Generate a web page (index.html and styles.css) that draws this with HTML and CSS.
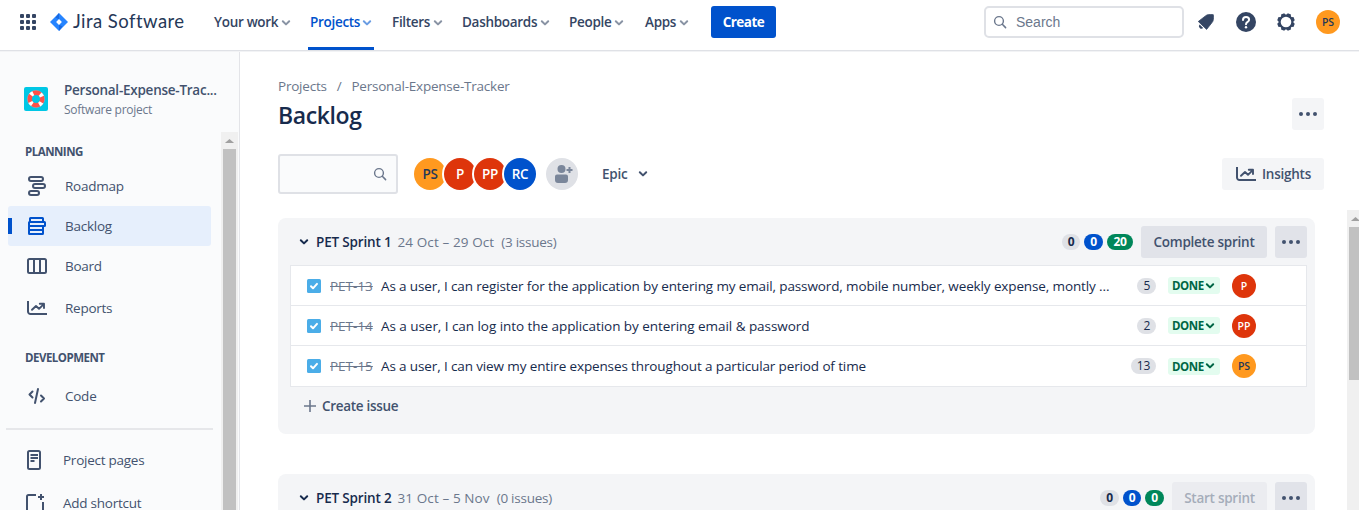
FILE: index.html
```html
<!DOCTYPE html>
<html lang="en">
<head>
<meta charset="utf-8">
<title>Backlog - Jira Software</title>
<link rel="stylesheet" href="styles.css">
</head>
<body>
<svg class="defs" width="0" height="0">
  <symbol id="chev" viewBox="0 0 10 8"><path d="M1.8 2.2 5 5.4 8.2 2.2" fill="none" stroke="currentColor" stroke-width="2" stroke-linecap="round" stroke-linejoin="round"/></symbol>
  <symbol id="search" viewBox="0 0 14 14"><circle cx="6" cy="6" r="4.4" fill="none" stroke="currentColor" stroke-width="1.4"/><path d="M9.3 9.3 12.6 12.6" stroke="currentColor" stroke-width="1.5" stroke-linecap="round"/></symbol>
  <symbol id="dots" viewBox="0 0 18 4"><circle cx="2" cy="2" r="2"/><circle cx="9" cy="2" r="2"/><circle cx="16" cy="2" r="2"/></symbol>
  <symbol id="chart" viewBox="0 0 20 14"><path d="M1 0v10.5A2.5 2.5 0 0 0 3.500 13H20" fill="none" stroke="currentColor" stroke-width="2"/><path d="M5 8.800 9 5l3 2.800L16.500 3.300M12.800 2.800H17V7" fill="none" stroke="currentColor" stroke-width="1.900" stroke-linejoin="round" stroke-linecap="round"/></symbol>
  <symbol id="task" viewBox="0 0 14 14"><rect width="14" height="14" rx="1.500" fill="#4bade8"/><path d="M4 7.300 6 9.300 10 4.900" fill="none" stroke="#fff" stroke-width="2" stroke-linecap="round" stroke-linejoin="round"/></symbol>
</svg>

<header class="topbar">
  <svg class="switcher" width="16" height="16" fill="#344563"><rect width="4" height="4" rx="1"/><rect x="6" width="4" height="4" rx="1"/><rect x="12" width="4" height="4" rx="1"/><rect y="6" width="4" height="4" rx="1"/><rect x="6" y="6" width="4" height="4" rx="1"/><rect x="12" y="6" width="4" height="4" rx="1"/><rect y="12" width="4" height="4" rx="1"/><rect x="6" y="12" width="4" height="4" rx="1"/><rect x="12" y="12" width="4" height="4" rx="1"/></svg>
  <svg class="mark" width="18" height="18" viewBox="0 0 18 18"><path d="M9 0 18 9 9 18 0 9Z" fill="#2684ff"/><path d="M9 0 5.500 4.500 9 6.200Z" fill="#1868e0"/><path d="M9 18 12.500 13.500 9 11.800Z" fill="#1868e0"/><path d="M9 6.100 11.900 9 9 11.900 6.100 9Z" fill="#fff"/></svg>
  <span class="brand">Jira Software</span>
  <nav class="menu">
    <a class="tab"><span>Your work</span><svg><use href="#chev"/></svg></a>
    <a class="tab active"><span>Projects</span><svg><use href="#chev"/></svg></a>
    <a class="tab"><span>Filters</span><svg><use href="#chev"/></svg></a>
    <a class="tab"><span>Dashboards</span><svg><use href="#chev"/></svg></a>
    <a class="tab"><span>People</span><svg><use href="#chev"/></svg></a>
    <a class="tab"><span>Apps</span><svg><use href="#chev"/></svg></a>
  </nav>
  <button class="create">Create</button>
  <div class="global-search"><svg width="14" height="14"><use href="#search"/></svg><span>Search</span></div>
  <div class="tools">
    <svg width="20" height="20" viewBox="0 0 20 20" fill="#344563"><path d="M9.500 3.900C11 2.500 13.500 2.400 17.300 2.700 17.700 6.500 17.500 9 16 10.600L10.600 17.400 2.300 9.500Z" stroke="#344563" stroke-width=".8" stroke-linejoin="round"/><path d="M3.600 12.400 7.200 16A2.550 2.550 0 0 1 3.600 12.400Z"/></svg>
    <svg width="20" height="20" viewBox="0 0 20 20"><circle cx="10" cy="10" r="10" fill="#344563"/><path d="M7 7.900C7 4 13.100 4.200 13.100 7.700 13.100 10 10 9.700 10 12.200" fill="none" stroke="#fff" stroke-width="2" stroke-linecap="round"/><circle cx="10" cy="15.200" r="1.200" fill="#fff"/></svg>
    <svg width="20" height="20" viewBox="0 0 20 20"><circle cx="10" cy="10" r="6.400" fill="none" stroke="#344563" stroke-width="2.200"/><g fill="#344563"><path id="tooth" d="M7.400 3.800 8.300 1.200H11.700L12.600 3.800Z" transform="rotate(22.500 10 10)"/><use href="#tooth" transform="rotate(45 10 10)"/><use href="#tooth" transform="rotate(90 10 10)"/><use href="#tooth" transform="rotate(135 10 10)"/><use href="#tooth" transform="rotate(180 10 10)"/><use href="#tooth" transform="rotate(225 10 10)"/><use href="#tooth" transform="rotate(270 10 10)"/><use href="#tooth" transform="rotate(315 10 10)"/></g></svg>
    <span class="avatar small orange">PS</span>
  </div>
</header>

<div class="body">
  <aside class="sidebar">
    <div class="project">
      <svg width="24" height="24" viewBox="0 0 24 24"><rect width="24" height="24" rx="2" fill="#00c7e5"/><circle cx="12" cy="12" r="8.400" fill="none" stroke="#a3a9bd" stroke-width="1"/><circle cx="12" cy="12" r="6.200" fill="none" stroke="#ff5148" stroke-width="4.400"/><circle cx="12" cy="12" r="6.400" fill="none" stroke="#fff" stroke-width="4.400" stroke-dasharray="2.900 7.153" stroke-dashoffset="-3.577"/></svg>
      <div><div class="project-name">Personal-Expense-Trac...</div><div class="project-type">Software project</div></div>
    </div>
    <div class="side-scroll">
      <div class="side-items">
        <h2>PLANNING</h2>
        <a class="side"><svg width="20" height="20" fill="none" stroke="#42526e" stroke-width="2"><rect x="2" y="1" width="14" height="4" rx="2"/><rect x="6" y="8" width="12" height="4" rx="2"/><rect x="2" y="15" width="10" height="4" rx="2"/></svg><span>Roadmap</span></a>
        <a class="side selected"><svg width="20" height="20" fill="none" stroke="#0052cc" stroke-width="2" stroke-linejoin="round"><rect x="3" y="2" width="13" height="4" rx=".5"/><rect x="2" y="6" width="16" height="4" rx=".5"/><rect x="2" y="10" width="14" height="4" rx=".5"/><rect x="2" y="14" width="14" height="4" rx=".5"/></svg><span>Backlog</span></a>
        <a class="side"><svg width="20" height="20" fill="none" stroke="#42526e" stroke-width="2"><rect x="1" y="3" width="18" height="14" rx="1.500"/><path d="M7 3V17M13 3V17"/></svg><span>Board</span></a>
        <a class="side reports"><svg width="20" height="14" class="ink"><use href="#chart"/></svg><span>Reports</span></a>
        <h2 class="dev">DEVELOPMENT</h2>
        <a class="side"><svg width="20" height="20" fill="none" stroke="#42526e" stroke-width="2" stroke-linecap="round" stroke-linejoin="round"><path d="M5.500 5.500 2.500 8.500 5.500 11.500M11 3 8 17M14 9.500 17 12.500 14 15.500"/></svg><span>Code</span></a>
        <hr>
        <a class="side page"><svg width="20" height="20" fill="none" stroke="#42526e" stroke-width="2"><rect x="3" y="1" width="12" height="18" rx="1.500"/><path d="M5.500 5H13M5.500 8H13M5.500 11H9.500"/></svg><span>Project pages</span></a>
        <a class="side page shortcut"><svg width="20" height="20" fill="none" stroke="#42526e" stroke-width="2"><path d="M11 2H3.500A1.500 1.500 0 0 0 2 3.500V17.500A1.500 1.500 0 0 0 3.500 19H16.500A1.500 1.500 0 0 0 18 17.500V9M16 1V7M13 4H19"/></svg><span>Add shortcut</span></a>
      </div>
      <div class="scrollbar"><i class="up"></i><i class="thumb"></i></div>
    </div>
  </aside>

  <main class="main">
    <div class="crumbs"><span>Projects</span><span class="slash">/</span><span>Personal-Expense-Tracker</span></div>
    <div class="title-row"><h1>Backlog</h1><button class="icon-btn light"><svg width="18" height="4"><use href="#dots"/></svg></button></div>
    <div class="filters">
      <div class="find"><svg width="14" height="14"><use href="#search"/></svg></div>
      <div class="people"><span class="avatar blue">RC</span><span class="avatar red">PP</span><span class="avatar red">P</span><span class="avatar orange">PS</span></div>
      <span class="avatar add"><svg width="18" height="18" viewBox="0 0 18 18" fill="#7a869a"><circle cx="6.500" cy="4" r="4"/><path d="M0 11.500A2 2 0 0 1 2 9.500H11A2 2 0 0 1 13 11.500V15A3 3 0 0 1 10 18H3A3 3 0 0 1 0 15Z"/><path d="M11.500 4H17.500V6H11.500ZM13.500 2H15.500V8H13.500Z"/></svg></span>
      <div class="epic"><span>Epic</span><svg width="10" height="8"><use href="#chev"/></svg></div>
      <button class="insights"><svg width="20" height="14"><use href="#chart"/></svg><span>Insights</span></button>
    </div>

    <div class="board">
      <div class="sprints">
        <section class="sprint">
          <div class="sprint-head"><svg width="10" height="8"><use href="#chev"/></svg><b>PET Sprint 1</b><span class="dates">24 Oct – 29 Oct</span><span class="count">(3 issues)</span>
            <div class="actions"><i class="pill w18">0</i><i class="pill blue w19">0</i><i class="pill green w26">20</i><button class="complete">Complete sprint</button><button class="icon-btn"><svg width="18" height="4"><use href="#dots"/></svg></button></div>
          </div>
          <div class="issues">
            <div class="issue"><svg width="14" height="14"><use href="#task"/></svg><s>PET-13</s><span class="summary">As a user, I can register for the application by entering my email, password, mobile number, weekly expense, montly ...</span><i class="points">5</i><span class="done"><em>DONE</em><svg width="10" height="8"><use href="#chev"/></svg></span><span class="avatar small red">P</span></div>
            <div class="issue"><svg width="14" height="14"><use href="#task"/></svg><s>PET-14</s><span class="summary login">As a user, I can log into the application by entering email &amp; password</span><i class="points">2</i><span class="done"><em>DONE</em><svg width="10" height="8"><use href="#chev"/></svg></span><span class="avatar small red">PP</span></div>
            <div class="issue"><svg width="14" height="14"><use href="#task"/></svg><s>PET-15</s><span class="summary">As a user, I can view my entire expenses throughout a particular period of time</span><i class="points">13</i><span class="done"><em>DONE</em><svg width="10" height="8"><use href="#chev"/></svg></span><span class="avatar small orange">PS</span></div>
          </div>
          <div class="new-issue"><svg width="12" height="12" stroke="#6b778c" stroke-width="1.600"><path d="M6 0V12M0 6H12"/></svg><span>Create issue</span></div>
        </section>
        <section class="sprint">
          <div class="sprint-head"><svg width="10" height="8"><use href="#chev"/></svg><b>PET Sprint 2</b><span class="dates">31 Oct – 5 Nov</span><span class="count">(0 issues)</span>
            <div class="actions"><i class="pill w19">0</i><i class="pill blue w18">0</i><i class="pill green w19">0</i><button class="start" disabled>Start sprint</button><button class="icon-btn"><svg width="18" height="4"><use href="#dots"/></svg></button></div>
          </div>
          <div class="issues"></div>
        </section>
      </div>
      <div class="scrollbar"><i class="up"></i><i class="thumb"></i></div>
    </div>
  </main>
</div>
</body>
</html>
```

FILE: styles.css
```css
* { box-sizing: border-box; }
body {
  margin: 0;
  width: 1359px;
  height: 510px;
  overflow: hidden;
  display: flex;
  flex-direction: column;
  background: #fff;
  color: #172b4d;
  font-family: "Open Sans", "Noto Sans", sans-serif;
  font-size: 13.5px;
  line-height: 20px;
  letter-spacing: -0.25px;
  white-space: nowrap;
}
svg { display: block; flex: none; }
.defs { position: absolute; }
button { border: 0; padding: 0; font: inherit; letter-spacing: inherit; color: #42526e; border-radius: 3px; }
i, em { font-style: normal; }

/* Top bar */
.topbar {
  height: 52px;
  padding-bottom: 8px;
  flex: none;
  display: flex;
  align-items: center;
  background: linear-gradient(#fff 50px, #dfe1e6 50px, #dfe1e6 51px, #f2f3f5 51px);
}
.switcher { margin-left: 20px; }
.mark { margin-left: 14px; }
.brand { width: 141px; margin-left: 5px; font: 18.5px/24px Lato, sans-serif; letter-spacing: 0.45px; color: #253858; padding-bottom: 2px; }
.menu { display: grid; grid-template-columns: 96px 82px 70px 107px 76px 66px; width: 497px; height: 50px; margin-bottom: -6px; }
.tab { display: flex; align-items: center; gap: 3px; height: 50px; padding-bottom: 6px; font-weight: 600; color: #344563; justify-self: start; letter-spacing: -0.3px; }
.tab svg { width: 10px; height: 8px; color: #8993a4; margin-top: 1px; }
.tab.active { width: 66px; color: #0052cc; padding: 0 2px 3px; margin-left: -2px; border-bottom: 3px solid #0052cc; gap: 2px; }
.tab.active svg { color: #6a9de3; }
.create { width: 65px; height: 32px; background: #0052cc; color: #fff; font-weight: 700; letter-spacing: -0.5px; }
.global-search {
  display: flex; align-items: center; gap: 9px;
  width: 200px; height: 32px; margin-left: 208px; padding-left: 7px;
  border: 2px solid #dfe1e6; border-radius: 5px;
  font: 14px/20px "Liberation Sans", sans-serif; letter-spacing: 0; color: #6b778c;
}
.tools { display: flex; align-items: center; gap: 20px; margin-left: 12px; }

.avatar {
  width: 32px; height: 32px; border-radius: 50%; flex: none;
  display: flex; align-items: center; justify-content: center;
  font-weight: 600; color: #fff;
}
.avatar.small { width: 24px; height: 24px; font-size: 10.5px; letter-spacing: 0; }
.orange { background: #ff991f; color: #253858; }
.red { background: #de350b; }
.blue { background: #0052cc; }

/* Sidebar */
.body { flex: 1; min-height: 0; display: flex; }
.sidebar { width: 240px; flex: none; background: #fafbfc; border-right: 1px solid #e3e4e8; display: flex; flex-direction: column; color: #42526e; }
.project { height: 80px; flex: none; display: flex; gap: 16px; padding: 28px 0 0 24px; }
.project > svg { margin-top: 7px; }
.project-name { font-weight: 600; }
.project-type { font-size: 12px; line-height: 18px; color: #6b778c; margin-top: 1px; }
.side-scroll { flex: 1; min-height: 0; display: flex; overflow: hidden; }
.side-items { width: 221px; }
h2 { margin: 12px 0 6px 25px; font-size: 11.5px; line-height: 16px; font-weight: 700; letter-spacing: -0.5px; }
.side { display: flex; align-items: center; gap: 18px; height: 40px; width: 203px; margin-left: 8px; padding-left: 19px; border-radius: 3px; }
.side.selected { background: linear-gradient(#0052cc, #0052cc) 0 12px / 4px 16px no-repeat #e6effc; }
.side.reports { margin-top: 2px; }
.ink { color: #42526e; }
h2.dev { margin: 22px 0 10px 25px; }
hr { width: 207px; height: 2px; margin: 12px 0 10px 6px; border: 0; background: #e6e7ea; }
.side.page { padding-left: 17px; }
.side.shortcut { margin-top: 3px; }

.scrollbar { width: 17px; flex: none; background: #f0f0f0; padding: 0 2px; }
.up { display: block; height: 17px; background: #a0a0a0; clip-path: polygon(50% 7px, 85% 11px, 15% 11px); }
.thumb { display: block; height: 400px; background: #c1c1c1; }

/* Main */
.main { flex: 1; min-width: 0; padding-left: 38px; display: flex; flex-direction: column; }
.crumbs { display: flex; margin-top: 24px; color: #6b778c; letter-spacing: -0.22px; }
.slash { margin: 0 10px; }
.title-row { display: flex; height: 32px; margin-top: 2px; justify-content: space-between; padding-right: 35px; }
h1 { margin: 3px 0 0; font-size: 23px; line-height: 28px; font-weight: 600; letter-spacing: -0.4px; }
.icon-btn { width: 32px; height: 32px; display: flex; align-items: center; justify-content: center; background: #e1e3e9; fill: #42526e; }
.light, .insights { background: #f4f5f7; }
.filters { display: flex; align-items: center; height: 40px; margin-top: 24px; padding-right: 35px; }
.find { width: 120px; height: 40px; border: 2px solid #dfe1e6; border-radius: 3px; background: #fafbfc; display: flex; align-items: center; justify-content: flex-end; padding-right: 9px; color: #6b778c; }
/* reversed so that each avatar overlaps the one to its right */
.people { display: flex; flex-direction: row-reverse; margin-left: 16px; }
.people .avatar { box-shadow: 0 0 0 2px #fff; margin-right: -2px; }
.add { margin-left: 12px; background: #dfe1e6; }
.add svg { margin-left: 4px; }
.epic { display: flex; align-items: center; gap: 11px; margin-left: 24px; font-weight: 600; color: #42526e; }
.insights { display: flex; align-items: center; gap: 6px; width: 102px; height: 32px; margin-left: auto; padding-left: 14px; font-weight: 600; }
.board { flex: 1; min-height: 0; display: flex; justify-content: space-between; margin-top: 16px; overflow: hidden; }
.board .scrollbar { width: 12px; padding: 0 0 0 2px; overflow: hidden; }
.board .up, .board .thumb { width: 13px; }
.board .thumb { height: 153px; }
.sprints { padding-top: 8px; }
.sprint { width: 1037px; height: 216px; margin-bottom: 40px; padding: 8px 8px 0 12px; border-radius: 8px; background: #f4f5f7; }
.sprint-head { display: flex; align-items: center; height: 32px; padding-left: 9px; }
.sprint-head b { font-weight: 600; margin-left: 7px; letter-spacing: -0.17px; }
.dates { margin-left: 6px; color: #6b778c; letter-spacing: 0.1px; }
.count { margin-left: 7px; color: #6b778c; }
.actions { display: flex; align-items: center; margin-left: auto; }
.pill, .points { height: 16px; border-radius: 8px; background: #dfe1e6; font-size: 12px; line-height: 16px; text-align: center; }
.pill { font-weight: 700; margin-right: 4px; }
.pill.blue { background: #0052cc; color: #fff; }
.pill.green { background: #00875a; color: #fff; }
.w18 { width: 18px; }
.w19 { width: 19px; }
.w26 { width: 26px; }
.complete, .start { width: 126px; height: 32px; margin: 0 8px 0 4px; background: #e1e3e9; font-weight: 600; }
.start { width: 95px; background: #ebecf0; color: #a5adba; }
.issues { margin-top: 7px; border: 1px solid #e6e8ec; background: #fff; }
.issue { display: flex; align-items: center; height: 40px; padding: 0 50px 0 16px; border-bottom: 1px solid #e6e8ec; }
.issue:last-child { border: 0; }
.issue s { width: 43px; margin-left: 9px; color: #6b778c; letter-spacing: 0; }
.summary { margin-left: 8px; letter-spacing: -0.125px; }
.summary.login { letter-spacing: -0.05px; }
.points { margin-left: auto; padding: 0 6px; min-width: 18px; }
.done { display: flex; align-items: center; gap: 1px; width: 52px; height: 17px; margin: 0 12px; padding-left: 4px; border-radius: 3px; background: #e3fcef; color: #006644; }
.done em { font-size: 11.5px; line-height: 17px; font-weight: 700; letter-spacing: -0.4px; width: 32px; }
.new-issue { display: flex; align-items: center; gap: 6px; height: 38px; padding-left: 14px; color: #42526e; font-weight: 600; letter-spacing: -0.3px; }
```
